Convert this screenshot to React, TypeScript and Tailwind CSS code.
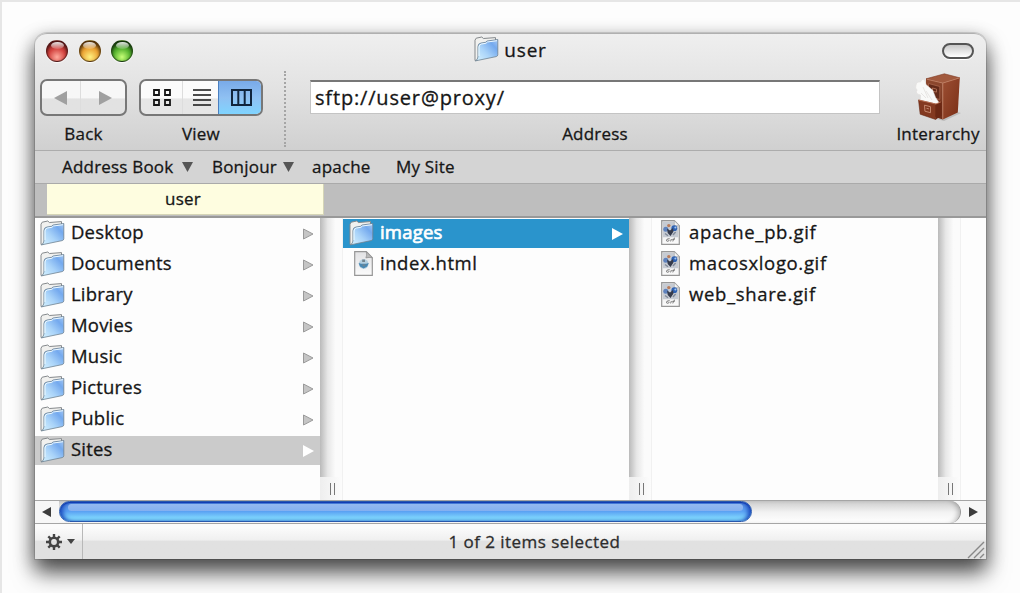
import { useState } from "react";
import clsx from "clsx";

type FileKind = "folder" | "html" | "gif";

interface Entry {
  name: string;
  kind: FileKind;
}

const HOME: Entry[] = [
  { name: "Desktop", kind: "folder" },
  { name: "Documents", kind: "folder" },
  { name: "Library", kind: "folder" },
  { name: "Movies", kind: "folder" },
  { name: "Music", kind: "folder" },
  { name: "Pictures", kind: "folder" },
  { name: "Public", kind: "folder" },
  { name: "Sites", kind: "folder" },
];

const SITES: Entry[] = [
  { name: "images", kind: "folder" },
  { name: "index.html", kind: "html" },
];

const IMAGES: Entry[] = [
  { name: "apache_pb.gif", kind: "gif" },
  { name: "macosxlogo.gif", kind: "gif" },
  { name: "web_share.gif", kind: "gif" },
];

/* Shared gradients for the icons */
function IconDefs() {
  return (
    <svg className="absolute h-0 w-0" aria-hidden="true">
      <defs>
        <linearGradient id="folderFront" x1="0" y1="1" x2="1" y2="0.1">
          <stop offset="0" stopColor="#d8f4ff" />
          <stop offset="0.45" stopColor="#a9d3f9" />
          <stop offset="0.8" stopColor="#74a9ee" />
          <stop offset="1" stopColor="#9cc2f2" />
        </linearGradient>
        <linearGradient id="paper" x1="0" y1="0" x2="0" y2="1">
          <stop offset="0" stopColor="#e2e2e4" />
          <stop offset="1" stopColor="#fbfbfb" />
        </linearGradient>
        <linearGradient id="woodLeft" x1="0" y1="0" x2="0" y2="1">
          <stop offset="0" stopColor="#8f4a30" />
          <stop offset="1" stopColor="#6d2b17" />
        </linearGradient>
        <linearGradient id="woodRight" x1="0" y1="0" x2="1" y2="1">
          <stop offset="0" stopColor="#9c4f33" />
          <stop offset="1" stopColor="#7a2e16" />
        </linearGradient>
      </defs>
    </svg>
  );
}

function FolderIcon() {
  return (
    <svg width="25" height="26" viewBox="0 0 25 26" className="shrink-0">
      <path
        d="M1 24.5V4.2L2.2 2.2L7.8 1l1.6 1.5L21.5 1.6v3L4 24z"
        fill="#f1f1ef"
        stroke="#85898c"
        strokeWidth="1"
        strokeLinejoin="round"
      />
      <path
        d="M1.4 24.9Q3.6 24 3.9 21V10.6Q4 7.4 7 7l4.5-.7L13 5l10.8-1.5V18.8Q23.7 20.2 22.2 20.6z"
        fill="url(#folderFront)"
        stroke="#6e8291"
        strokeWidth="0.8"
        strokeLinejoin="round"
      />
      <path d="M5 20V11Q5.1 8.5 7.5 8l4.4-.7L13.4 6 23 4.7" fill="none" stroke="#eefaff" strokeWidth="1" />
    </svg>
  );
}

function HtmlIcon() {
  return (
    <svg width="19" height="25" viewBox="0 0 19 25" className="shrink-0">
      <path d="M.7.7h11.6l6 6v17.6H.7z" fill="url(#paper)" stroke="#979797" strokeWidth="1.2" />
      <path d="M12.3.7q.9 3.8-.4 6.2 3-.9 6.4-.2z" fill="#b9b9b9" stroke="#8d8d8d" strokeWidth=".7" />
      <circle cx="9.7" cy="13" r="4.8" fill="#b3cfe0" />
      <path d="M4.6 11.9q5 1.8 10.2 0l-1.6 3.7-3.6 1.8-3.6-2z" fill="#4a88b2" />
      <path d="M7.6 13.6h4.4l-2.2 1.8zM8.2 8.6h2.8v2.4H8.2z" fill="#74858f" />
    </svg>
  );
}

function GifIcon() {
  return (
    <svg width="19" height="25" viewBox="0 0 19 25" className="shrink-0">
      <path d="M.7.7h12.6l5 5v18.6H.7z" fill="url(#paper)" stroke="#979797" strokeWidth="1.2" />
      <path d="M2 1.8h11.2l4 4.4v11H2z" fill="#c6cbd3" />
      <path d="M13.3.7v5h5z" fill="#f3f3f3" stroke="#a3a3a3" strokeWidth=".6" />
      <circle cx="7.8" cy="5.6" r="1.7" fill="#b97c5b" />
      <circle cx="4.8" cy="9.2" r="2.5" fill="#5e82bd" />
      <circle cx="13.3" cy="8.2" r="2.9" fill="#2f62b3" />
      <circle cx="14.4" cy="7.4" r="1" fill="#a5c9f0" />
      <path d="M6 8.5l3 2 3-2.5.5 3.5-3 4.5-2.8-3z" fill="#353b4c" />
      <path d="M4 13.5l3 2.2M14.6 12l-2.6 3" stroke="#818a99" strokeWidth="1.4" />
      <path
        d="M8.6 18.6q-3.8.2-3.1 2.2.8 1.3 3-.5M10.4 19l-.8 2.4M14 17.9q-1.6 0-2.2 3.5M11.3 19.4h2.4"
        stroke="#777"
        fill="none"
      />
    </svg>
  );
}

function CabinetIcon() {
  return (
    <svg width="50" height="48" viewBox="0 0 50 48" className="shrink-0">
      <path d="M24 46l20-7 4 1-17 8z" fill="#999" opacity=".45" />
      <path d="M13 5.8L31.4.8l15.4 4-17 5.2z" fill="#a25a3e" stroke="#81402a" strokeWidth=".6" />
      <path d="M13 5.8L29.8 10v36.5L13 41z" fill="url(#woodLeft)" />
      <path d="M29.8 10l17-5.2-2 34.8-15 6.9z" fill="url(#woodRight)" />
      <path d="M29.8 10v36M14 6.3L29.8 10l17-5.2" fill="none" stroke="#c68568" strokeWidth=".8" />
      <path d="M15.5 10.5l11.3 3v13l-11.3-3z" fill="#632a19" stroke="#a9664b" strokeWidth=".8" />
      <path d="M19.5 15l4 1.1v3l-4-1z" fill="none" stroke="#bb795d" strokeWidth=".8" />
      <path
        d="M3 12.5q.5-4.3 4.5-3.4 1.4-3.8 4-2.4l1.5 4.8 6.8 5.8 2.7 7 5.2 8-20-3.8L7.5 22Q1.5 20.5 4.2 17q-2.4-1.8-1.2-4.5z"
        fill="#f9f9f8"
        stroke="#dedbd9"
        strokeWidth=".5"
      />
      <path d="M10 14l5 11M13 18l6 9M8 20l5 5" stroke="#e2dfdd" fill="none" strokeWidth=".8" />
      <path d="M5.5 27L22.8 31v15.5L7.2 41.2z" fill="#833920" stroke="#672712" strokeWidth=".6" />
      <path d="M22.8 31l6-2.5v14l-6 4z" fill="#6b2814" />
      <path d="M5.5 27L22.8 31l5-2" fill="none" stroke="#bd7355" strokeWidth=".9" />
      <path d="M11.5 32.2l6 1.5v6l-5.6-1.5zM13.5 35.3l2.4.6" fill="none" stroke="#c98f75" strokeWidth=".9" />
    </svg>
  );
}

function EntryIcon({ kind }: { kind: FileKind }) {
  if (kind === "folder") return <FolderIcon />;
  return (
    <span className={clsx("flex", kind === "html" ? "ml-[5px] mr-px" : "ml-1 mr-0.5")}>
      {kind === "html" ? <HtmlIcon /> : <GifIcon />}
    </span>
  );
}

function DownArrow() {
  return (
    <svg width="11" height="10" viewBox="0 0 11 10">
      <path d="M0 0h11L5.5 10z" fill="#555" />
    </svg>
  );
}

interface FileColumnProps {
  entries: Entry[];
  selected?: string;
  active?: boolean;
  className?: string;
  onSelect?: (name: string) => void;
}

function FileColumn({ entries, selected, active, className, onSelect }: FileColumnProps) {
  return (
    <div className={clsx("flex shrink-0 flex-col gap-0.5 bg-[#fdfdfd] pt-px", className)}>
      {entries.map((entry) => {
        const isSelected = entry.name === selected;
        return (
          <div
            key={entry.name}
            onClick={() => onSelect?.(entry.name)}
            className={clsx(
              "flex h-[29px] items-center pb-[2px] pr-[6px] text-[18.5px] leading-6",
              active === undefined ? "pl-[5px]" : "pl-[6px]",
              isSelected && active && "bg-[#2a94cc] text-white [-webkit-text-stroke:0.7px]",
              isSelected && !active && "bg-[#cbcbcb]"
            )}
          >
            <EntryIcon kind={entry.kind} />
            <span
              className={clsx(
                "pb-[2px]",
                entry.kind === "folder" && "ml-[6px] tracking-[0.2px]",
                entry.kind === "html" && "ml-[6px] tracking-[0.55px]",
                entry.kind === "gif" && "ml-[7px] tracking-[0.65px]"
              )}
            >
              {entry.name}
            </span>
            {entry.kind === "folder" && (
              <svg width="11" height="12" viewBox="0 0 11 12" className="ml-auto mt-[2px]">
                {isSelected ? (
                  <path d="M0 0L11 6L0 12z" fill="#fff" />
                ) : (
                  <path d="M.5 1L10 6L.5 11z" fill="#c5c5c5" stroke="#9a9a9a" />
                )}
              </svg>
            )}
          </div>
        );
      })}
    </div>
  );
}

function ColumnDivider() {
  return (
    <div className="flex w-[23px] shrink-0 flex-col border-r border-[#f1f1f1]">
      <div className="flex-1 bg-linear-to-r from-[#bababa] via-[#e7e7e7] via-35% to-[#fbfbfb] to-70%" />
      <div className="flex h-[23px] items-center justify-center gap-[3px] bg-linear-to-r from-[#eeeeee] to-[#fcfcfc] pl-0.5">
        <span className="h-3 w-px bg-[#777]" />
        <span className="h-3 w-px bg-[#777]" />
      </div>
    </div>
  );
}

function TrafficLight({ className }: { className: string }) {
  return (
    <span
      className={clsx(
        "flex h-[22px] w-[22px] justify-center rounded-full border border-black/45 pt-px shadow-[inset_0_2px_3px_rgba(0,0,0,0.55),0_1px_1px_rgba(255,255,255,0.9)]",
        className
      )}
    >
      <span className="h-[7px] w-[13px] rounded-[50%] bg-linear-to-b from-white/90 to-white/15" />
    </span>
  );
}

export default function App() {
  const [homeSelection, setHomeSelection] = useState("Sites");
  const [sitesSelection, setSitesSelection] = useState("images");

  return (
    <div className="h-[593px] w-[1020px] overflow-hidden border-l-2 border-t-2 border-[#e6e6e6] bg-[#fdfdfd] pl-[33px] pt-[31px] font-['Open_Sans','Noto_Sans',sans-serif] text-[#161616] [-webkit-text-stroke:0.3px]">
      <IconDefs />
      <div className="flex h-[526px] w-[951px] flex-col rounded-t-[12px] shadow-[0_0_0_1px_rgba(0,0,0,0.12),0_14px_22px_0_rgba(0,0,0,0.62),0_5px_18px_1px_rgba(0,0,0,0.28)]">
        {/* Title bar and toolbar */}
        <div className="flex h-[118px] shrink-0 flex-col rounded-t-[12px] border-b border-t border-b-[#acacac] border-t-[#b0b0b0] bg-linear-to-b from-[#efefef] via-[#e3e3e3] via-45% to-[#d0d0d0]">
          <div className="grid h-[34px] grid-cols-[1fr_auto_1fr] items-center px-[11px]">
            <div className="flex gap-[10.5px]">
              <TrafficLight className="bg-[radial-gradient(circle_at_50%_80%,#ffab9e,#d44440_45%,#87201f_85%)]" />
              <TrafficLight className="bg-[radial-gradient(circle_at_50%_80%,#fff181,#eca535_45%,#91520c_85%)]" />
              <TrafficLight className="bg-[radial-gradient(circle_at_50%_80%,#c7ff77,#56b32f_45%,#205a11_85%)]" />
            </div>
            <div className="flex items-center gap-[5px]">
              <span className="-mt-1 flex">
                <FolderIcon />
              </span>
              <span className="-mt-0.5 text-[19px] tracking-[0.8px]">user</span>
            </div>
            <span className="mr-px h-4 w-8 justify-self-end rounded-full border-2 border-[#555] bg-linear-to-b from-[#c9c9c9] to-white shadow-[0_1px_0_#fff]" />
          </div>

          <div className="flex flex-1 pt-px text-[17px] leading-5 tracking-[0.2px]">
            <div className="flex flex-col items-center pl-[5px] pt-[10px]">
              <div className="flex h-[37px] w-[87px] rounded-[7px] border-2 border-[#777] bg-linear-to-b from-[#f7f7f7] from-50% to-[#e2e2e2] to-55%">
                <div className="flex flex-1 items-center justify-center border-r border-[#ddd]">
                  <svg width="14" height="14" viewBox="0 0 14 14">
                    <path d="M13 0v14L0 7z" fill="#a0a0a0" />
                  </svg>
                </div>
                <div className="flex flex-1 items-center justify-center pl-1.5">
                  <svg width="14" height="14" viewBox="0 0 14 14">
                    <path d="M0 0v14l13-7z" fill="#a0a0a0" />
                  </svg>
                </div>
              </div>
              <span className="mt-2">Back</span>
            </div>

            <div className="flex flex-col items-center pl-3 pt-[10px]">
              <div className="flex h-[37px] w-[124px] overflow-hidden rounded-[7px] border-2 border-[#777] bg-linear-to-b from-[#fbfbfb] from-50% to-[#e6e6e6] to-55%">
                <div className="flex w-[42px] items-center justify-center border-r border-[#ddd]">
                  <svg width="18" height="17" viewBox="0 0 18 17" fill="none" stroke="#151515" strokeWidth="1.8">
                    <path d="M1 1h5v5H1zM12 1h5v5h-5zM1 11h5v5H1zM12 11h5v5h-5z" />
                  </svg>
                </div>
                <div className="flex w-[35px] items-center justify-center pl-0.5">
                  <svg width="18" height="17" viewBox="0 0 18 17" stroke="#151515" strokeWidth="1.7">
                    <path d="M0 1h18M0 6h18M0 11h18M0 16h18" />
                  </svg>
                </div>
                <div className="flex flex-1 items-center justify-center border-l border-[#4a7fc0] bg-linear-to-b from-[#79aae8] via-[#8fc0f2] via-50% to-[#7fd4ff] pl-0.5">
                  <svg width="21" height="17" viewBox="0 0 21 17" fill="none" stroke="#10243c" strokeWidth="2">
                    <path d="M1 1h19v15H1zM7.3 1v15M13.7 1v15" />
                  </svg>
                </div>
              </div>
              <span className="mt-2">View</span>
            </div>

            <div className="ml-[21px] mt-[2px] h-[76px] border-l-2 border-dotted border-[#a5a5a5]" />

            <div className="ml-[24px] flex w-[570px] flex-col items-center pt-[11px]">
              <div className="flex h-[34px] w-full items-center border border-t-2 border-[#c4c4c4] border-t-[#777] bg-white pl-[4px] text-[20px] tracking-[0.83px]">
                sftp://user@proxy/
              </div>
              <span className="mt-[10px]">Address</span>
            </div>

            <div className="ml-[13px] flex w-[90px] flex-col items-center pt-[4px]">
              <CabinetIcon />
              <span className="mt-[3px]">Interarchy</span>
            </div>
          </div>
        </div>

        {/* Bookmarks */}
        <div className="flex h-[33px] shrink-0 items-center border-b border-[#aaa] bg-[#d4d4d4] pl-[27px] text-[17px] tracking-[0.2px]">
          <span className="flex w-[150px] items-center gap-[9px]">
            Address Book <DownArrow />
          </span>
          <span className="flex w-[100px] items-center gap-1.5">
            Bonjour <DownArrow />
          </span>
          <span className="w-[84px]">apache</span>
          <span>My Site</span>
        </div>

        {/* Tabs */}
        <div className="flex h-[34px] shrink-0 border-b-2 border-[#999] bg-[#bebebe] pl-[12px]">
          <div className="flex h-[31px] w-[277px] items-center justify-center border-b border-r border-[#d5d5b6] bg-[#fefde0] pr-1 text-[17px] tracking-[0.2px]">
            user
          </div>
        </div>

        {/* Column browser */}
        <div className="flex min-h-0 flex-1 overflow-hidden bg-[#fdfdfd]">
          <FileColumn entries={HOME} selected={homeSelection} className="w-[285px]" onSelect={setHomeSelection} />
          <ColumnDivider />
          <FileColumn
            entries={SITES}
            selected={sitesSelection}
            active
            className="w-[286px]"
            onSelect={setSitesSelection}
          />
          <ColumnDivider />
          <FileColumn entries={IMAGES} className="w-[286px]" />
          <ColumnDivider />
        </div>

        {/* Horizontal scrollbar */}
        <div className="flex h-[24px] shrink-0 items-center border-y border-[#a5a5a5] bg-[#f7f7f7]">
          <svg width="24" height="12" viewBox="0 0 24 12">
            <path d="M16 1v10L7 6z" fill="#3c3c3c" />
          </svg>
          <div className="h-[22px] flex-1 rounded-r-full border-r border-[#999] bg-linear-to-b from-[#cccccc] via-[#f2f2f2] via-50% to-white shadow-[inset_-4px_0_5px_-2px_rgba(0,0,0,0.25)]">
            <div className="h-[21px] w-[693px] rounded-full border border-[#2858ad] bg-linear-to-b from-[#5b8fe0] via-[#5ba2f3] via-50% to-[#90ecff] shadow-[inset_0_1px_1px_#0e37b0,inset_4px_0_4px_-1px_#1f50c0,inset_-4px_0_4px_-1px_#1f50c0]">
              <div className="mx-2 mt-[2px] h-[7px] rounded-full bg-linear-to-b from-[#94b9ef] to-[#83b0f0]" />
            </div>
          </div>
          <svg width="25" height="12" viewBox="0 0 25 12">
            <path d="M8 1v10l9-5z" fill="#3c3c3c" />
          </svg>
        </div>

        {/* Status bar */}
        <div className="flex h-[35px] shrink-0 bg-linear-to-b from-[#fbfbfb] from-10% via-[#f0f0f0] via-45% to-[#e1e1e1] to-50% text-[17px]">
          <div className="flex w-[48px] items-center justify-center gap-[5px] border-r border-[#b8b8b8] pl-1">
            <svg width="16" height="16" viewBox="0 0 16 16" stroke="#444" fill="none">
              <circle cx="8" cy="8" r="4.2" strokeWidth="2.6" />
              <path
                d="M8 0v3M8 13v3M0 8h3M13 8h3M2.3 2.3l2.2 2.2M11.5 11.5l2.2 2.2M2.3 13.7l2.2-2.2M11.5 4.5l2.2-2.2"
                strokeWidth="2.4"
              />
            </svg>
            <svg width="8" height="5" viewBox="0 0 8 5">
              <path d="M0 0h8L4 5z" fill="#444" />
            </svg>
          </div>
          <div className="flex flex-1 items-center justify-center pl-[19px] tracking-[0.45px] text-[#2c2c2c]">
            1 of 2 items selected
          </div>
          <svg width="18" height="18" viewBox="0 0 18 18" className="mr-px self-end" stroke="#888" strokeWidth="1.4">
            <path d="M1 17L17 1M7 17L17 7M13 17l4-4" />
          </svg>
        </div>
      </div>
    </div>
  );
}
